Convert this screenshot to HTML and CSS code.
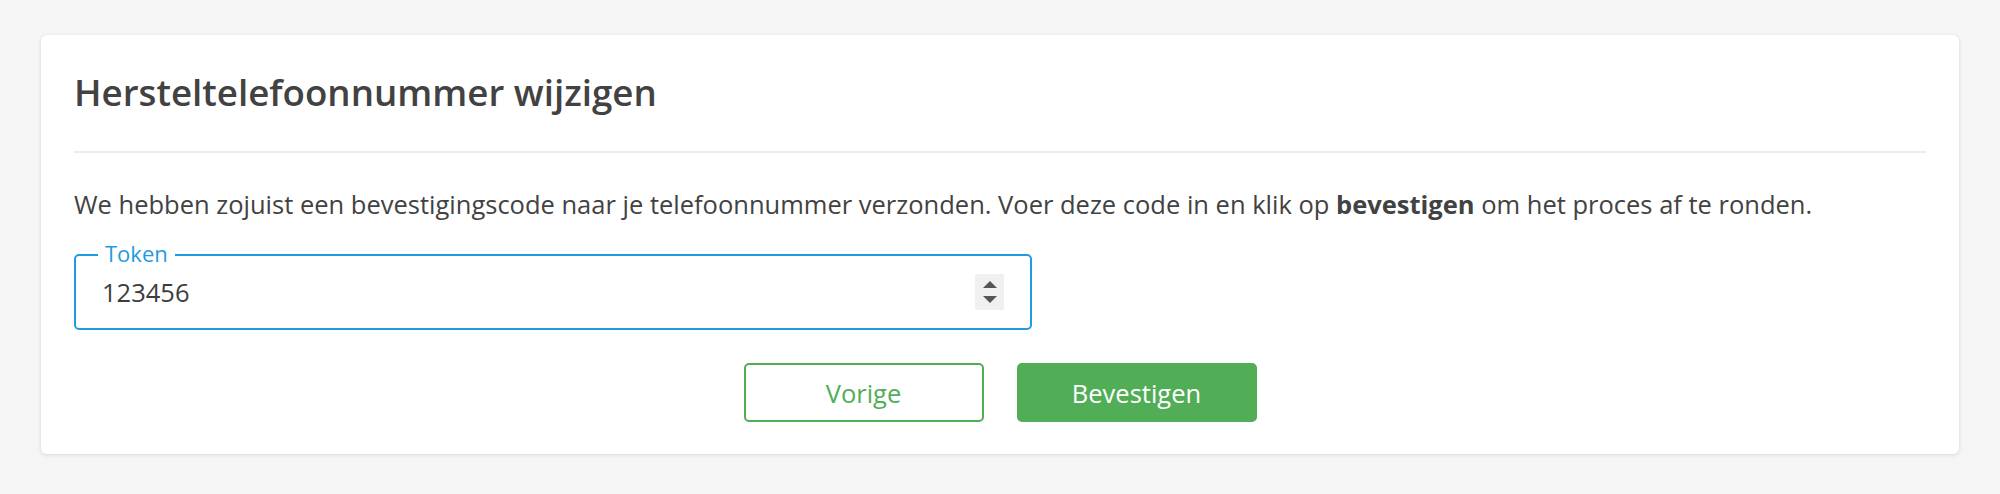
FILE: index.html
```html
<!DOCTYPE html>
<html lang="nl">
<head>
<meta charset="utf-8">
<title>Hersteltelefoonnummer wijzigen</title>
<link rel="stylesheet" href="styles.css">
</head>
<body>
<main class="card">
  <h1 class="card-title">Hersteltelefoonnummer wijzigen</h1>
  <hr class="divider">
  <p class="intro">We hebben zojuist een bevestigingscode naar je telefoonnummer verzonden. Voer deze code in en klik op <strong>bevestigen</strong> om het proces af te ronden.</p>
  <div class="field">
    <span class="field-label">Token</span>
    <span class="field-value">123456</span>
    <span class="spinner" aria-hidden="true">
      <svg width="14" height="22" viewBox="0 0 14 22"><path d="M7 0 L14 7 L0 7 Z" fill="#555"/><path d="M0 15 L14 15 L7 22 Z" fill="#555"/></svg>
    </span>
  </div>
  <div class="actions">
    <button class="btn btn-outline" type="button">Vorige</button>
    <button class="btn btn-primary" type="button">Bevestigen</button>
  </div>
</main>
</body>
</html>
```
FILE: styles.css
```css
html, body {
  margin: 0;
  padding: 0;
  background: #f5f5f5;
}
body {
  padding: 35px 41px 40px;
  font-family: "Open Sans", "Noto Sans", sans-serif;
  color: #424242;
}
.card {
  background: #fff;
  border-radius: 6px;
  box-shadow: 0 1px 4px rgba(0, 0, 0, 0.12);
  padding: 35px 33px 32px;
  display: flex;
  flex-direction: column;
}
.card-title {
  margin: 0;
  font-size: 36.7px;
  line-height: 45px;
  font-weight: 600;
  color: #424242;
}
.divider {
  margin: 36px 0 0;
  border: 0;
  height: 2px;
  background: #ececec;
}
.intro {
  margin: 33px 0 0;
  font-size: 25.5px;
  line-height: 36px;
  color: #424242;
}
.intro strong {
  font-weight: 700;
}
.field {
  position: relative;
  margin-top: 32px;
  width: 958px;
  height: 76px;
  box-sizing: border-box;
  border: 2px solid #1f9be0;
  border-radius: 5px;
  padding: 0 26px;
  display: flex;
  align-items: center;
  justify-content: space-between;
}
.field-label {
  position: absolute;
  left: 22px;
  top: -17px;
  padding: 0 7px;
  background: #fff;
  color: #1f9be0;
  font-size: 22px;
  line-height: 28px;
}
.field-value {
  font-size: 25.5px;
  color: #3d3d3d;
}
.spinner {
  width: 29px;
  height: 36px;
  background: #f0f0f0;
  display: flex;
  align-items: center;
  justify-content: center;
}
.actions {
  margin-top: 33px;
  display: flex;
  justify-content: center;
  gap: 33px;
}
.btn {
  width: 240px;
  height: 59px;
  border-radius: 5px;
  font-family: "Open Sans", "Noto Sans", sans-serif;
  font-size: 25.5px;
  box-sizing: border-box;
  cursor: pointer;
}
.btn-outline {
  background: #fff;
  border: 2px solid #51ae56;
  color: #51ae56;
}
.btn-primary {
  background: #51ae56;
  border: 2px solid #51ae56;
  color: #fff;
}
```
